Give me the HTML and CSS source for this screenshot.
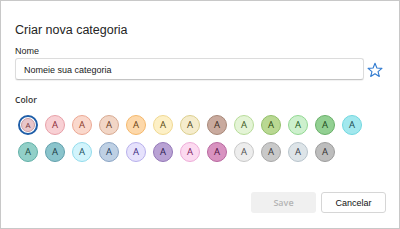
FILE: index.html
```
<!DOCTYPE html>
<html>
<head>
<meta charset="utf-8">
<link rel="stylesheet" href="styles.css">
</head>
<body>
<div class="dialog">
  <div class="title">Criar nova categoria</div>
  <div class="label">Nome</div>
  <div class="name-row">
    <div class="input">Nomeie sua categoria</div>
    <svg class="star" width="16" height="16" viewBox="0 0 16 16"><polygon points="8,1.3 9.88,6.01 14.94,6.34 11.04,9.59 12.29,14.51 8,11.8 3.71,14.51 4.96,9.59 1.06,6.34 6.12,6.01" fill="none" stroke="#2f7ad0" stroke-width="1.1" stroke-linejoin="round"/></svg>
  </div>
  <div class="label color-label">Color</div>
  <div class="swatches">
    <div class="sw selected"><span class="inner c1">A</span></div>
    <div class="sw c2">A</div>
    <div class="sw c3">A</div>
    <div class="sw c4">A</div>
    <div class="sw c5">A</div>
    <div class="sw c6">A</div>
    <div class="sw c7">A</div>
    <div class="sw c8">A</div>
    <div class="sw c9">A</div>
    <div class="sw c10">A</div>
    <div class="sw c11">A</div>
    <div class="sw c12">A</div>
    <div class="sw c13">A</div>
    <div class="sw d1">A</div>
    <div class="sw d2">A</div>
    <div class="sw d3">A</div>
    <div class="sw d4">A</div>
    <div class="sw d5">A</div>
    <div class="sw d6">A</div>
    <div class="sw d7">A</div>
    <div class="sw d8">A</div>
    <div class="sw d9">A</div>
    <div class="sw d10">A</div>
    <div class="sw d11">A</div>
    <div class="sw d12">A</div>
  </div>
  <div class="footer">
    <div class="btn save">Save</div>
    <div class="btn cancel">Cancelar</div>
  </div>
</div>
</body>
</html>
```
FILE: styles.css
```
html, body {
  margin: 0;
  padding: 0;
  background: #fff;
}
.dialog {
  width: 400px;
  height: 229px;
  box-sizing: border-box;
  border: 1px solid #c8c8c8;
  padding: 21px 13px 15px 14px;
  display: flex;
  flex-direction: column;
  font-family: "Liberation Sans", Arial, sans-serif;
  color: #242424;
}
.title {
  font-size: 12.5px;
  line-height: 16px;
  color: #242424;
}
.label {
  font-size: 9px;
  line-height: 12px;
  margin-top: 7px;
  color: #242424;
}
.name-row {
  display: flex;
  align-items: center;
  margin-top: 1px;
}
.input {
  width: 349px;
  height: 22px;
  box-sizing: border-box;
  border: 1px solid #dcdcdc;
  border-bottom-color: #c4c4c4;
  border-radius: 3px;
  padding: 5px 0 0 8px;
  font-size: 9px;
  line-height: 12px;
  color: #1a1a1a;
  box-shadow: 0 1px 1px rgba(0,0,0,0.06);
}
.star {
  margin-left: 3px;
  margin-top: 1px;
}
.color-label {
  margin-top: 14px;
  font-family: "Open Sans", "Liberation Sans", sans-serif;
  font-weight: 600;
  font-size: 8.5px;
  color: #333;
}
.swatches {
  display: grid;
  grid-template-columns: repeat(13, 20px);
  column-gap: 7px;
  row-gap: 7px;
  margin: 9px 0 0 3px;
}
.sw {
  width: 20px;
  height: 20px;
  box-sizing: border-box;
  border-radius: 50%;
  border: 1px solid;
  display: flex;
  align-items: center;
  justify-content: center;
  font-family: "Open Sans", "Liberation Sans", sans-serif;
  font-size: 9.5px;
  line-height: 1;
}
.sw.selected {
  border: 2px solid #1f5ea8;
  background: #fff;
}
.inner {
  width: 14px;
  height: 14px;
  box-sizing: border-box;
  border-radius: 50%;
  border: 1px solid;
  display: flex;
  align-items: center;
  justify-content: center;
  font-size: 8px;
}
.c1 { background: #e8c6ca; border-color: #c89ca2; color: #7a3a42; }
.c2 { background: #f8d0d4; border-color: #e8a0a8; color: #8b2a35; }
.c3 { background: #fad8cc; border-color: #eca894; color: #8a3a28; }
.c4 { background: #f2d6c6; border-color: #d8aa92; color: #6a3a20; }
.c5 { background: #fdd8aa; border-color: #f5b86c; color: #6a4010; }
.c6 { background: #fdf0c6; border-color: #f0d892; color: #5a4a10; }
.c7 { background: #f5eccc; border-color: #dccf8e; color: #4a4420; }
.c8 { background: #c9aa9e; border-color: #a88878; color: #3a2a20; }
.c9 { background: #e4f4d6; border-color: #b8dc9a; color: #3a5a20; }
.c10 { background: #b9d892; border-color: #92c06a; color: #2a4a10; }
.c11 { background: #cdf0cd; border-color: #92d892; color: #1a5a1a; }
.c12 { background: #92d092; border-color: #6ab06a; color: #1a4a1a; }
.c13 { background: #a2e8ee; border-color: #72d8e0; color: #1a4a50; }
.d1 { background: #92d0c8; border-color: #62b0a8; color: #1a4a44; }
.d2 { background: #8ac4cc; border-color: #62a0ac; color: #1a3a44; }
.d3 { background: #d2f4fc; border-color: #92dcec; color: #205060; }
.d4 { background: #bed0e4; border-color: #8aa4c4; color: #203a5a; }
.d5 { background: #e6e2fc; border-color: #b8b0ec; color: #3a2a80; }
.d6 { background: #b9a2d4; border-color: #9478b8; color: #2a1a50; }
.d7 { background: #fcdaf0; border-color: #eeacd8; color: #7a2060; }
.d8 { background: #d892c0; border-color: #b868a0; color: #4a1040; }
.d9 { background: #ededed; border-color: #c8c8c8; color: #505050; }
.d10 { background: #c9c9c9; border-color: #a8a8a8; color: #383838; }
.d11 { background: #dde4e8; border-color: #b8c4cc; color: #384048; }
.d12 { background: #bdbdbd; border-color: #9c9c9c; color: #303030; }
.footer {
  margin-top: auto;
  display: flex;
  justify-content: flex-end;
  gap: 5px;
}
.btn {
  width: 65px;
  height: 21px;
  box-sizing: border-box;
  border-radius: 3px;
  display: flex;
  align-items: center;
  justify-content: center;
  font-size: 9px;
}
.save {
  background: #f0f0f0;
  color: #b4b4b4;
  font-family: "Open Sans", "Liberation Sans", sans-serif;
  font-weight: 600;
}
.cancel {
  background: #fff;
  border: 1px solid #d6d6d6;
  color: #111;
}
```
